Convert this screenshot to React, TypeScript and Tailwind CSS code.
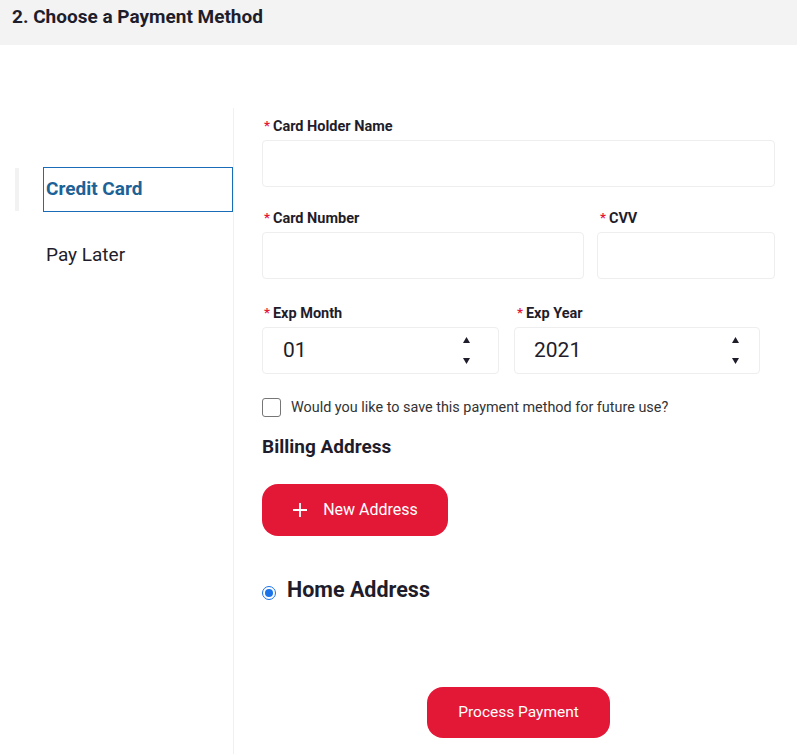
import { FC } from "react"

const Label: FC<{ text: string }> = ({ text }) => (
  <div className="flex h-[15px] items-start text-[14.5px] font-bold leading-[15px] text-[#1f1d2b]">
    <span className="ml-[2px] mr-[3px] text-[13px] leading-[13px] text-[#e31837]">*</span>
    <span>{text}</span>
  </div>
)

const Spinner = () => (
  <div className="flex flex-col items-center gap-[15px] text-[#1f1d2b]">
    <svg width="7" height="6" viewBox="0 0 7 6"><path d="M3.5 0L7 6H0z" fill="currentColor" /></svg>
    <svg width="7" height="6" viewBox="0 0 7 6"><path d="M0 0H7L3.5 6z" fill="currentColor" /></svg>
  </div>
)

export default function App() {
  return (
    <div className="min-h-[754px] w-[797px] bg-white font-['Roboto',sans-serif] text-[#1f1d2b]">
      <div className="flex h-[45px] items-start bg-[#f3f3f3] px-[12px] pt-[5px]">
        <h2 className="text-[19px] font-bold leading-[24px]">2. Choose a Payment Method</h2>
      </div>

      <div className="mt-[63px] flex min-h-[646px]">
        <div className="w-[234px] shrink-0 border-r border-[#f0f0f0] pt-[59px]">
          <div className="flex items-center">
            <div className="ml-[15px] h-[43px] w-[4px] bg-[#f2f2f2]" />
            <div className="ml-[24px] flex h-[45px] w-[191px] items-center border border-[#1a6bb8] pl-[2px] text-[19px] font-bold text-[#1d6296]">
              Credit Card
            </div>
          </div>
          <div className="ml-[46px] mt-[30px] text-[19px] leading-[26px]">Pay Later</div>
        </div>

        <div className="flex-1 pl-[28px] pt-[11px] pr-[22px]">
          <Label text="Card Holder Name" />
          <div className="mt-[6px] h-[47px] w-[513px] rounded-[4px] border border-[#eeeeee]" />

          <div className="mt-[24px] flex gap-[13px]">
            <div className="w-[322px]">
              <Label text="Card Number" />
              <div className="mt-[6px] h-[47px] rounded-[4px] border border-[#eeeeee]" />
            </div>
            <div className="w-[178px]">
              <div className="pl-[1px]"><Label text="CVV" /></div>
              <div className="mt-[6px] h-[47px] rounded-[4px] border border-[#eeeeee]" />
            </div>
          </div>

          <div className="mt-[27px] flex gap-[15px]">
            <div className="w-[237px]">
              <Label text="Exp Month" />
              <div className="mt-[6px] flex h-[47px] items-center justify-between rounded-[4px] border border-[#eeeeee] pl-[20px] pr-[28px]">
                <span className="text-[21px]">01</span>
                <Spinner />
              </div>
            </div>
            <div className="w-[246px]">
              <div className="pl-[1px]"><Label text="Exp Year" /></div>
              <div className="mt-[6px] flex h-[47px] items-center justify-between rounded-[4px] border border-[#eeeeee] pl-[19px] pr-[20px]">
                <span className="text-[21px]">2021</span>
                <Spinner />
              </div>
            </div>
          </div>

          <label className="mt-[24px] flex h-[19px] items-center gap-[10px]">
            <span className="h-[19px] w-[19px] rounded-[3px] border border-[#767676] bg-white" />
            <span className="text-[14.4px] text-[#333]">Would you like to save this payment method for future use?</span>
          </label>

          <h3 className="mt-[19px] text-[19px] font-bold leading-[22px]">Billing Address</h3>

          <button className="mt-[26px] flex h-[52px] w-[186px] items-center justify-center gap-[15px] rounded-[16px] bg-[#e31837] text-[16px] text-white">
            <svg width="16" height="16" viewBox="0 0 16 16"><path d="M8 1V15M1 8H15" stroke="white" strokeWidth="1.8" /></svg>
            New Address
          </button>

          <div className="mt-[41px] flex h-[26px] items-center gap-[11px]">
            <span className="mt-[5px] flex h-[14px] w-[14px] items-center justify-center rounded-full border-[1.5px] border-[#1a73e8]">
              <span className="h-[8px] w-[8px] rounded-full bg-[#1a73e8]" />
            </span>
            <span className="text-[21.5px] font-bold leading-[26px]">Home Address</span>
          </div>

          <div className="mt-[84px] flex pl-[165px]">
            <button className="flex h-[51px] w-[183px] items-center justify-center rounded-[16px] bg-[#e31837] text-[15.5px] text-white">
              Process Payment
            </button>
          </div>
        </div>
      </div>
    </div>
  )
}
